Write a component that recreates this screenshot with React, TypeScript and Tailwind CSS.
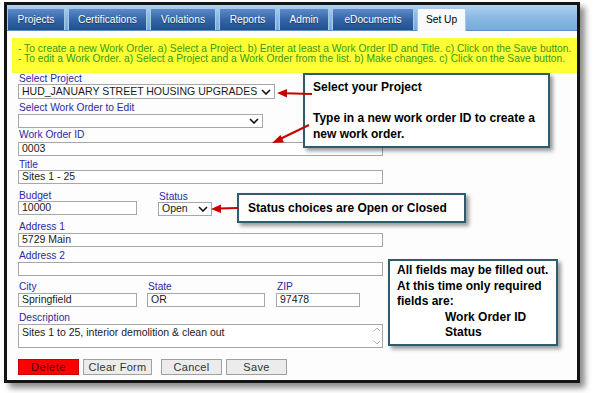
import React from "react";

const Chevron = () => (
  <svg width="10" height="6" viewBox="0 0 10 6" className="shrink-0">
    <path d="M1 1 L5 5 L9 1" fill="none" stroke="#111" strokeWidth="1.6" />
  </svg>
);

const Label = ({ children, className = "" }: { children: React.ReactNode; className?: string }) => (
  <div className={"h-[10px] leading-[10px] text-[10.2px] text-[#2a2aa3] pl-[1px] whitespace-nowrap " + className}>
    {children}
  </div>
);

const Box = ({ children, className = "" }: { children?: React.ReactNode; className?: string }) => (
  <div
    className={
      "border border-[#a7a7a7] bg-white text-[10.5px] text-[#1a1a1a] pl-[3px] flex items-center whitespace-nowrap overflow-hidden " +
      className
    }
  >
    {children}
  </div>
);

const tabs = [
  { t: "Projects", w: "w-[58px]" },
  { t: "Certifications", w: "w-[79px]" },
  { t: "Violations", w: "w-[66px]" },
  { t: "Reports", w: "w-[57px]" },
  { t: "Admin", w: "w-[50px]" },
  { t: "eDocuments", w: "w-[82px]" },
];

export default function App() {
  return (
    <div className="relative w-[594px] h-[393px] bg-white overflow-hidden font-['Liberation_Sans',Arial,sans-serif]">
      <div className="pt-[2px] pl-[4px]">
        <div className="w-[576px] h-[381px] border-[3px] border-[#141414] bg-[#fdfdfd] shadow-[5px_5px_6px_rgba(0,0,0,0.45)] flex flex-col">
          {/* Tab bar */}
          <div className="h-[26px] shrink-0 flex items-end gap-[3px] border-b border-[#5b8fc8] bg-[linear-gradient(#b2d2ef,#8dbbe4_45%,#77aadb)]">
            {tabs.map((x) => (
              <div
                key={x.t}
                className={
                  x.w +
                  " h-[22px] flex items-center justify-center rounded-t-[2px] border border-b-0 border-[#a9c8e8] bg-[linear-gradient(#5b8bc9,#3566a8_50%,#22508f)] text-white text-[10.2px] [text-shadow:0_1px_1px_rgba(0,0,0,0.5)]"
                }
              >
                {x.t}
              </div>
            ))}
            <div className="w-[49px] h-[23px] -mb-px flex items-center justify-center rounded-t-[2px] border border-b-0 border-[#a9c8e8] bg-[#f7f9fc] text-black text-[10.2px]">
              Set Up
            </div>
          </div>

          {/* Yellow info */}
          <div className="ml-[5px] mt-[7px] h-[35px] bg-[#ffff33] pl-[6px] pt-[6px] text-[10.3px] leading-[10px] text-[#3a9a12] whitespace-nowrap overflow-hidden">
            <div>- To create a new Work Order. a) Select a Project. b) Enter at least a Work Order ID and Title. c) Click on the Save button.</div>
            <div>- To edit a Work Order. a) Select a Project and a Work Order from the list. b) Make changes. c) Click on the Save button.</div>
          </div>

          {/* Form */}
          <div className="pl-[11px] flex flex-col">
            <Label className="mt-[1px]">Select Project</Label>
            <Box className="w-[257px] h-[15px] justify-between pr-[3px] text-[10.4px]">
              <span>HUD_JANUARY STREET HOUSING UPGRADES</span>
              <Chevron />
            </Box>

            <Label className="mt-[4px]">Select Work Order to Edit</Label>
            <Box className="mt-[1px] w-[245px] h-[14px] justify-end pr-[3px]">
              <Chevron />
            </Box>

            <Label className="mt-[2px]">Work Order ID</Label>
            <Box className="mt-[2px] w-[365px] h-[14px]">0003</Box>

            <Label className="mt-[4px]">Title</Label>
            <Box className="w-[365px] h-[14px]">Sites 1 - 25</Box>

            <div className="flex">
              <div className="flex flex-col">
                <Label className="mt-[7px]">Budget</Label>
                <Box className="w-[119px] h-[14px]">10000</Box>
              </div>
              <div className="ml-[21px] flex flex-col">
                <Label className="mt-[8px]">Status</Label>
                <Box className="w-[54px] h-[14px] justify-between pr-[3px]">
                  <span>Open</span>
                  <Chevron />
                </Box>
              </div>
            </div>

            <Label className="mt-[6px]">Address 1</Label>
            <Box className="mt-[1px] w-[365px] h-[14px]">5729 Main</Box>

            <Label className="mt-[4px]">Address 2</Label>
            <Box className="mt-[1px] w-[365px] h-[14px]" />

            <div className="flex">
              <div className="flex flex-col">
                <Label className="mt-[6px]">City</Label>
                <Box className="mt-[1px] w-[119px] h-[14px]">Springfield</Box>
              </div>
              <div className="ml-[10px] flex flex-col">
                <Label className="mt-[6px]">State</Label>
                <Box className="mt-[1px] w-[118px] h-[14px]">OR</Box>
              </div>
              <div className="ml-[11px] flex flex-col">
                <Label className="mt-[6px]">ZIP</Label>
                <Box className="mt-[1px] w-[84px] h-[14px]">97478</Box>
              </div>
            </div>

            <Label className="mt-[6px]">Description</Label>
            <div className="mt-[1px] w-[365px] h-[24px] border border-[#a7a7a7] bg-white flex justify-between">
              <div className="pl-[3px] pt-[1px] text-[10.5px] leading-[12px] text-[#1a1a1a]">
                Sites 1 to 25, interior demolition &amp; clean out
              </div>
              <div className="w-[10px] flex flex-col items-center justify-between py-[2px]">
                <svg width="8" height="5" viewBox="0 0 8 5">
                  <path d="M1 4 L4 1 L7 4" fill="none" stroke="#b0b0b0" strokeWidth="1" />
                </svg>
                <svg width="8" height="5" viewBox="0 0 8 5">
                  <path d="M1 1 L4 4 L7 1" fill="none" stroke="#b0b0b0" strokeWidth="1" />
                </svg>
              </div>
            </div>

            <div className="mt-[11px] flex gap-[4px] h-[16px] text-[11px]">
              <div className="w-[61px] flex items-center justify-center bg-[#ff0000] border border-[#c00] text-[#500000] tracking-[0.5px]">
                Delete
              </div>
              <div className="w-[69px] flex items-center justify-center bg-[#ececec] border border-[#a0a0a0] text-[#333] tracking-[0.3px]">
                Clear Form
              </div>
              <div className="ml-[5px] w-[61px] flex items-center justify-center bg-[#ececec] border border-[#a0a0a0] text-[#333] tracking-[0.3px]">
                Cancel
              </div>
              <div className="w-[61px] flex items-center justify-center bg-[#ececec] border border-[#a0a0a0] text-[#333] tracking-[0.3px]">
                Save
              </div>
            </div>
          </div>
        </div>
      </div>

      {/* Callouts */}
      <div className="absolute left-[303px] top-[73px] w-[247px] h-[75px] border-2 border-[#2d5c6c] bg-white shadow-[3px_3px_4px_rgba(0,0,0,0.4)] pl-[8px] pt-[5px] text-[12px] leading-[15.5px] font-bold text-black">
        <div>Select your Project</div>
        <div>&nbsp;</div>
        <div>Type in a new work order ID to create a</div>
        <div>new work order.</div>
      </div>

      <div className="absolute left-[237px] top-[193px] w-[229px] h-[30px] border-2 border-[#2d5c6c] bg-white shadow-[3px_3px_4px_rgba(0,0,0,0.4)] pl-[9px] flex items-center text-[12px] font-bold text-black">
        Status choices are Open or Closed
      </div>

      <div className="absolute left-[388px] top-[259px] w-[170px] h-[87px] border-2 border-[#2d5c6c] bg-white shadow-[3px_3px_4px_rgba(0,0,0,0.4)] pl-[7px] pt-[2px] text-[12px] leading-[15.5px] font-bold text-black">
        <div>All fields may be filled out.</div>
        <div>At this time only required</div>
        <div>fields are:</div>
        <div className="pl-[48px]">Work Order ID</div>
        <div className="pl-[48px]">Status</div>
      </div>

      {/* Arrows */}
      <svg className="absolute inset-0 pointer-events-none" width="594" height="393" viewBox="0 0 594 393">
        <g stroke="#c80000" strokeWidth="2" fill="#c80000">
          <line x1="312" y1="94" x2="285" y2="93.3" />
          <polygon points="277,93 287,89 287,97.5" stroke="none" />
          <line x1="309" y1="125" x2="279" y2="139.5" />
          <polygon points="272,143 280.5,135 284,142.5" stroke="none" />
          <line x1="238" y1="208" x2="219" y2="208.6" />
          <polygon points="211,209 221,204.5 221,213" stroke="none" />
        </g>
      </svg>
    </div>
  );
}
